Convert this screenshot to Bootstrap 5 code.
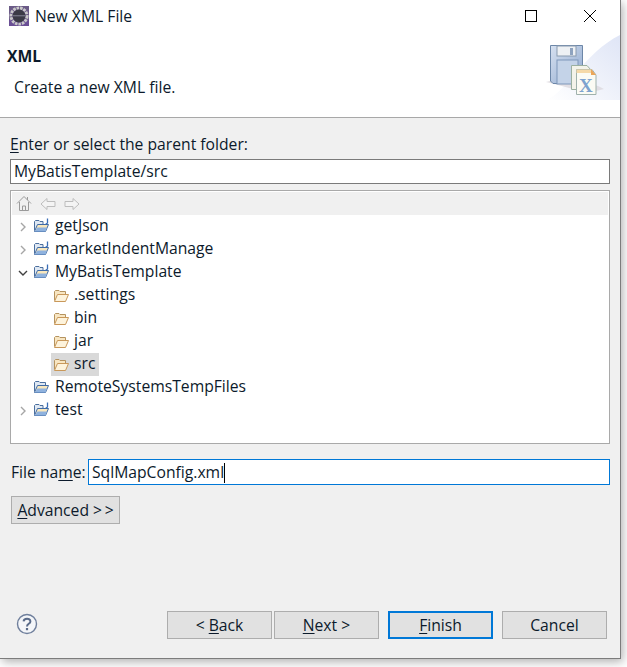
<!DOCTYPE html>
<html lang="en">
  <head>
    <meta charset="UTF-8" />
    <meta name="viewport" content="width=device-width, initial-scale=1.0" />
    <title>New XML File</title>
    <link
      href="https://cdn.jsdelivr.net/npm/bootstrap@5.3.3/dist/css/bootstrap.min.css"
      rel="stylesheet"
    />
    <style>
      html,
      body {
        height: 100%;
      }
      body {
        background: #fff;
        color: #0c1a2b;
        font-family: "Open Sans", "Liberation Sans", sans-serif;
        font-size: 15.7px;
        line-height: 20px;
        overflow: hidden;
      }
      u {
        text-underline-offset: 2px;
      }
      .dlg {
        width: 621px;
        height: 659px;
        background: #f0f0f0;
        border-right: 1px solid #7c7c7c;
        border-bottom: 1px solid #7c7c7c;
        box-shadow: 2px 3px 9px rgba(0, 0, 0, 0.3);
      }
      .dlg-title {
        height: 31px;
        background: #fff;
        padding-left: 9px;
      }
      .dlg-title span {
        margin-left: 6px;
      }
      .win-btn {
        width: 59px;
        height: 31px;
      }
      .win-btns {
        margin-right: 1px;
      }
      .dlg-banner {
        height: 87px;
        background: #fff;
        border-bottom: 1px solid #a8a8a8;
      }
      .banner-title {
        font-weight: 700;
        padding: 15px 0 0 7px;
      }
      .banner-text {
        padding: 11px 0 0 14px;
      }
      .banner-pic {
        display: block;
      }
      .pane {
        padding: 16px 10px 0 10px;
      }
      .win-input {
        height: 25px;
        margin-top: 5px;
        padding: 0 3px;
        border: 1px solid #7a7a7a;
        line-height: 23px;
        background: #fff;
      }
      .tree-box {
        height: 254px;
        margin-top: 6px;
        background: #fff;
        border: 1px solid #a9a9a9;
      }
      .tree-tools {
        height: 23px;
        margin: 1px 1px 0 1px;
        padding-left: 4px;
        background: #f0f0f0;
      }
      .tree-row {
        height: 23px;
      }
      .tree-arrow {
        width: 12px;
        height: 12px;
        margin-left: 6px;
        flex: none;
      }
      .tree-folder {
        width: 17px;
        height: 15px;
        margin: -3px 3px 0 4px;
        flex: none;
      }
      .depth-2 {
        padding-left: 40px;
      }
      .depth-2 .tree-folder {
        margin: 0 2px 0 2px;
      }
      .tree-name {
        padding: 0 2px 2px 2px;
        line-height: 21px;
      }
      .tree-sel {
        height: 23px;
        padding-right: 2px;
        background: #d9d9d9;
      }
      .name-row {
        margin-top: 15px;
        padding: 0 10px 0 11px;
      }
      .name-input {
        width: 522px;
        height: 26px;
        margin-left: auto;
        padding: 0 3px;
        border: 1px solid #0078d7;
        background: #fff;
        line-height: 24px;
      }
      .caret-bar {
        display: inline-block;
        width: 1px;
        height: 20px;
        background: #000;
        vertical-align: -5px;
      }
      .win-btn-push {
        display: block;
        height: 28px;
        padding: 0;
        border: 1px solid #adadad;
        border-radius: 0;
        background: #e1e1e1;
        color: #0c1a2b;
        font-size: 15.7px;
        line-height: 24px;
      }
      .btn-adv {
        width: 109px;
        margin: 11px 0 0 11px;
      }
      .dlg-foot {
        margin-top: auto;
        padding: 0 13px 19px 16px;
      }
      .btn-wiz {
        width: 105px;
      }
      .btn-next {
        margin-left: 2px;
      }
      .btn-gap {
        margin-left: 9px;
      }
      .btn-main {
        border: 2px solid #0078d7;
      }
      .help-ic {
        width: 22px;
        height: 22px;
        margin-bottom: 2px;
      }
    </style>
  </head>
  <body>
    <svg width="0" height="0" class="d-block">
      <defs>
        <symbol id="folder" viewBox="0 0 17 15">
          <path d="M1.5 12.5V3.5L2.5 2.5H6L7 3.5H12.5V6" fill="#f8e6c2" stroke="#b5935f" />
          <path d="M1.5 13.5L4.5 6.5H15.5L12.5 13.5Z" fill="#fdf3dc" stroke="#c9985a" />
        </symbol>
        <symbol id="project" viewBox="0 0 17 15">
          <path d="M1.5 12.5V3.5L2.5 2.5H6L7 3.5H12.5V6" fill="#dfe8f3" stroke="#4b6f9e" />
          <path d="M1.5 13.5L4.5 6.5H15.5L12.5 13.5Z" fill="#f8e7bd" stroke="#3f6aa5" />
          <path d="M2 13L4.5 9.5H14L12.5 13.5H2Z" fill="#8fb2de" />
        </symbol>
        <symbol id="project-open" viewBox="0 0 17 15">
          <path d="M1.5 12.5V3.5L2.5 2.5H6L7 3.5H10V6" fill="#dfe8f3" stroke="#4b6f9e" />
          <path d="M1.5 13.5L4.5 6.5H15.5L12.5 13.5Z" fill="#f8e7bd" stroke="#3f6aa5" />
          <path d="M2 13L4.5 9.5H14L12.5 13.5H2Z" fill="#8fb2de" />
          <path d="M14.5 0.5V5L12.5 6.5" fill="none" stroke="#3a6db5" stroke-width="1.3" />
        </symbol>
        <symbol id="closed" viewBox="0 0 12 12">
          <path d="M4 2L8 6L4 10" fill="none" stroke="#a6a6a6" stroke-width="1.4" />
        </symbol>
        <symbol id="opened" viewBox="0 0 12 12">
          <path d="M2 4L6 8L10 4" fill="none" stroke="#404040" stroke-width="1.4" />
        </symbol>
      </defs>
    </svg>

    <div class="dlg d-flex flex-column">
      <div class="dlg-title d-flex align-items-center">
        <svg width="20" height="20" viewBox="0 0 20 20">
          <rect width="20" height="20" fill="#6b5b87" />
          <rect y="14" width="20" height="6" fill="#6a4f95" />
          <circle cx="10" cy="10" r="8" fill="none" stroke="#c9c9c9" stroke-width="3" stroke-dasharray="2.6 0.9" />
          <circle cx="10" cy="10" r="6.4" fill="#3b3b46" />
          <rect x="4" y="9" width="12" height="1.4" fill="#6f6f7e" />
        </svg>
        <span>New XML File</span>
        <div class="win-btns ms-auto d-flex">
          <div class="win-btn d-flex align-items-center justify-content-center">
            <svg width="12" height="12" viewBox="0 0 12 12">
              <rect x="0.5" y="0.5" width="11" height="11" fill="none" stroke="#000" />
            </svg>
          </div>
          <div class="win-btn d-flex align-items-center justify-content-center">
            <svg width="12" height="12" viewBox="0 0 12 12">
              <path d="M0 0L12 12M12 0L0 12" stroke="#000" />
            </svg>
          </div>
        </div>
      </div>

      <div class="dlg-banner d-flex justify-content-between">
        <div>
          <div class="banner-title">XML</div>
          <div class="banner-text">Create a new XML file.</div>
        </div>
        <svg class="banner-pic" width="76" height="70" viewBox="0 0 76 70">
          <defs>
            <linearGradient id="swoosh" x1="0" y1="1" x2="1" y2="0">
              <stop offset="0" stop-color="#fff" />
              <stop offset="1" stop-color="#dfe5f6" />
            </linearGradient>
            <linearGradient id="disk" x1="0" y1="0" x2="1" y2="1">
              <stop offset="0" stop-color="#d7e1f0" />
              <stop offset="1" stop-color="#8fa9cf" />
            </linearGradient>
          </defs>
          <path d="M2 69C22 62 40 22 76 4V69Z" fill="url(#swoosh)" />
          <path d="M2 51C20 46 40 48 60 58L44 62L14 54Z" fill="#d9d4da" opacity="0.7" />
          <path d="M6.5 14.5H38.5V52.5H9L6.5 50Z" fill="url(#disk)" stroke="#6d87a8" />
          <rect x="13" y="15" width="19" height="10" fill="#eef1f4" stroke="#8a9bb0" />
          <rect x="26" y="17" width="3" height="7" fill="#8ea3bf" />
          <rect x="13" y="29" width="21" height="24" fill="#c4d3e8" stroke="#7f97ba" />
          <path d="M27.5 34.5H43L47 39V58.5H27.5Z" fill="#f3f3ea" stroke="#9bb0a0" />
          <path d="M32.5 38.5H48L52 44V63.5H32.5Z" fill="#fbfbf4" stroke="#9fb1ac" />
          <path d="M32.5 38.5H48V42H32.5Z" fill="#f5d9a8" />
          <path d="M47 38L52 44H47Z" fill="#eba65a" />
          <text x="35" y="61" font-family="Liberation Serif, serif" font-size="19" font-weight="700" fill="#7da3cf">X</text>
        </svg>
      </div>

      <div class="pane">
        <label class="d-block"><u>E</u>nter or select the parent folder:</label>
        <div class="win-input">MyBatisTemplate/src</div>
        <div class="tree-box">
          <div class="tree-tools d-flex align-items-center gap-1">
            <svg width="16" height="17" viewBox="0 0 16 17">
              <path d="M1 8.5L8 1.5L15 8.5M3.5 7V15.5H12.5V7M6.5 15.5V11H9.5V15.5M11.5 2V5" fill="none" stroke="#9a9a9a" />
            </svg>
            <svg width="16" height="14" viewBox="0 0 16 14" class="ms-1">
              <path d="M1 7L7 1.5V4.5H15V9.5H7V12.5Z" fill="#f4f4f4" stroke="#bdbdbd" />
            </svg>
            <svg width="16" height="14" viewBox="0 0 16 14" class="ms-1">
              <path d="M15 7L9 1.5V4.5H1V9.5H9V12.5Z" fill="#f4f4f4" stroke="#bdbdbd" />
            </svg>
          </div>
          <div class="tree-row d-flex align-items-center">
            <svg class="tree-arrow"><use href="#closed" /></svg>
            <svg class="tree-folder"><use href="#project-open" /></svg>
            <span class="tree-name">getJson</span>
          </div>
          <div class="tree-row d-flex align-items-center">
            <svg class="tree-arrow"><use href="#closed" /></svg>
            <svg class="tree-folder"><use href="#project-open" /></svg>
            <span class="tree-name">marketIndentManage</span>
          </div>
          <div class="tree-row d-flex align-items-center">
            <svg class="tree-arrow"><use href="#opened" /></svg>
            <svg class="tree-folder"><use href="#project-open" /></svg>
            <span class="tree-name">MyBatisTemplate</span>
          </div>
          <div class="tree-row depth-2 d-flex align-items-center">
            <svg class="tree-folder"><use href="#folder" /></svg>
            <span class="tree-name">.settings</span>
          </div>
          <div class="tree-row depth-2 d-flex align-items-center">
            <svg class="tree-folder"><use href="#folder" /></svg>
            <span class="tree-name">bin</span>
          </div>
          <div class="tree-row depth-2 d-flex align-items-center">
            <svg class="tree-folder"><use href="#folder" /></svg>
            <span class="tree-name">jar</span>
          </div>
          <div class="tree-row depth-2 d-flex align-items-center">
            <div class="tree-sel d-flex align-items-center">
              <svg class="tree-folder"><use href="#folder" /></svg>
              <span class="tree-name">src</span>
            </div>
          </div>
          <div class="tree-row d-flex align-items-center">
            <div class="tree-arrow"></div>
            <svg class="tree-folder"><use href="#project" /></svg>
            <span class="tree-name">RemoteSystemsTempFiles</span>
          </div>
          <div class="tree-row d-flex align-items-center">
            <svg class="tree-arrow"><use href="#closed" /></svg>
            <svg class="tree-folder"><use href="#project-open" /></svg>
            <span class="tree-name">test</span>
          </div>
        </div>
      </div>

      <div class="name-row d-flex align-items-center">
        <label>File na<u>m</u>e:</label>
        <div class="name-input">SqlMapConfig.xml<span class="caret-bar"></span></div>
      </div>

      <button type="button" class="btn win-btn-push btn-adv"><u>A</u>dvanced &gt;&thinsp;&gt;</button>

      <div class="dlg-foot d-flex align-items-center">
        <svg class="help-ic" viewBox="0 0 22 22">
          <circle cx="11" cy="11" r="9.5" fill="#f4f6f9" stroke="#6f7f9c" stroke-width="1.4" />
          <path d="M7.6 8.4C7.8 4.8 14.4 4.8 14.4 8.4C14.4 11 11 10.6 11 13.4" fill="none" stroke="#5a6b8a" stroke-width="2" />
          <rect x="9.9" y="15" width="2.2" height="2.2" fill="#5a6b8a" />
        </svg>
        <div class="ms-auto d-flex">
          <button type="button" class="btn win-btn-push btn-wiz">&lt; <u>B</u>ack</button>
          <button type="button" class="btn win-btn-push btn-wiz btn-next"><u>N</u>ext &gt;</button>
          <button type="button" class="btn win-btn-push btn-wiz btn-main btn-gap"><u>F</u>inish</button>
          <button type="button" class="btn win-btn-push btn-wiz btn-gap">Cancel</button>
        </div>
      </div>
    </div>
  </body>
</html>
